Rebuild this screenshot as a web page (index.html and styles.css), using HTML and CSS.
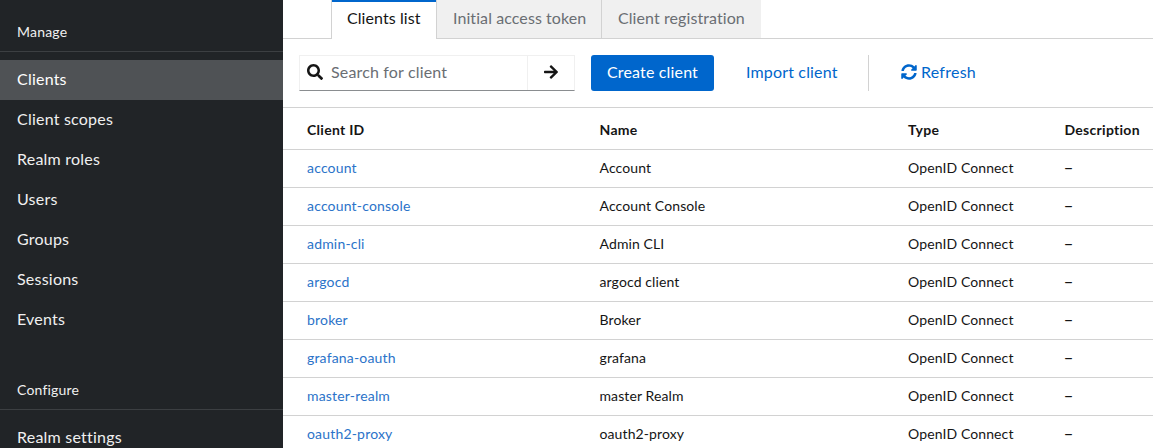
FILE: index.html
```html
<!DOCTYPE html>
<html lang="en">
<head>
<meta charset="utf-8">
<title>Clients</title>
<link rel="stylesheet" href="styles.css">
</head>
<body>
<div class="page">
  <nav class="sidebar">
    <section class="nav-section">
      <h2 class="nav-title">Manage</h2>
      <a class="nav-link nav-current">Clients</a>
      <a class="nav-link">Client scopes</a>
      <a class="nav-link">Realm roles</a>
      <a class="nav-link">Users</a>
      <a class="nav-link">Groups</a>
      <a class="nav-link">Sessions</a>
      <a class="nav-link">Events</a>
    </section>
    <section class="nav-section">
      <h2 class="nav-title">Configure</h2>
      <a class="nav-link">Realm settings</a>
    </section>
  </nav>
  <main class="main">
    <div class="tabs">
      <div class="tab tab-current">Clients list</div>
      <div class="tab tab-token">Initial access token</div>
      <div class="tab tab-registration">Client registration</div>
    </div>
    <div class="toolbar">
      <div class="search">
        <div class="search-field">
          <svg class="icon" viewBox="0 0 512 512"><path d="M505 442.7L405.3 343c-4.500-4.500-10.600-7-17-7H372c27.600-35.300 44-79.700 44-128C416 93.100 322.900 0 208 0S0 93.100 0 208s93.100 208 208 208c48.300 0 92.700-16.400 128-44v16.300c0 6.400 2.500 12.500 7 17l99.700 99.700c9.400 9.400 24.600 9.400 33.900 0l28.300-28.300c9.400-9.400 9.400-24.600.1-34zM208 336c-70.700 0-128-57.200-128-128 0-70.700 57.200-128 128-128 70.700 0 128 57.200 128 128 0 70.700-57.200 128-128 128z"/></svg>
          <span>Search for client</span>
        </div>
        <div class="search-submit">
          <svg class="arrow" viewBox="0 0 448 512"><path d="M190.500 66.900l22.200-22.200c9.400-9.400 24.600-9.400 33.900 0L441 239c9.400 9.400 9.400 24.600 0 33.900L246.600 467.300c-9.400 9.400-24.600 9.400-33.900 0l-22.200-22.200c-9.500-9.500-9.300-25 .4-34.300L311.400 296H24c-13.300 0-24-10.700-24-24v-32c0-13.300 10.700-24 24-24h287.400L190.900 101.200c-9.800-9.300-10-24.800-.4-34.300z"/></svg>
        </div>
      </div>
      <div class="button button-primary">Create client</div>
      <div class="button button-link">Import client</div>
      <div class="divider"></div>
      <div class="refresh">
        <svg class="icon" viewBox="0 0 512 512"><path d="M370.720 133.280C339.458 104.008 298.888 87.962 255.848 88c-77.458.068-144.328 53.178-162.791 126.850-1.344 5.363-6.122 9.150-11.651 9.150H24.103c-7.498 0-13.194-6.807-11.807-14.176C33.933 94.924 134.813 8 256 8c66.448 0 126.791 26.136 171.315 68.685L463.030 40.970C478.149 25.851 504 36.559 504 57.941V192c0 13.255-10.745 24-24 24H345.941c-21.382 0-32.090-25.851-16.971-40.971l41.750-41.749zM32 296h134.059c21.382 0 32.090 25.851 16.971 40.971l-41.750 41.750c31.262 29.273 71.835 45.319 114.876 45.280 77.418-.070 144.315-53.144 162.787-126.849 1.344-5.363 6.122-9.150 11.651-9.150h57.304c7.498 0 13.194 6.807 11.807 14.176C478.067 417.076 377.187 504 256 504c-66.448 0-126.791-26.136-171.315-68.685L48.970 471.030C33.851 486.149 8 475.441 8 454.059V320c0-13.255 10.745-24 24-24z"/></svg>
        <span>Refresh</span>
      </div>
    </div>
    <div class="table">
      <div class="row head"><span>Client ID</span><span>Name</span><span>Type</span><span>Description</span></div>
      <div class="row"><a class="client">account</a><span>Account</span><span>OpenID Connect</span><span class="dash">–</span></div>
      <div class="row"><a class="client">account-console</a><span>Account Console</span><span>OpenID Connect</span><span class="dash">–</span></div>
      <div class="row"><a class="client">admin-cli</a><span>Admin CLI</span><span>OpenID Connect</span><span class="dash">–</span></div>
      <div class="row"><a class="client">argocd</a><span>argocd client</span><span>OpenID Connect</span><span class="dash">–</span></div>
      <div class="row"><a class="client">broker</a><span>Broker</span><span>OpenID Connect</span><span class="dash">–</span></div>
      <div class="row"><a class="client">grafana-oauth</a><span>grafana</span><span>OpenID Connect</span><span class="dash">–</span></div>
      <div class="row"><a class="client">master-realm</a><span>master Realm</span><span>OpenID Connect</span><span class="dash">–</span></div>
      <div class="row"><a class="client">oauth2-proxy</a><span>oauth2-proxy</span><span>OpenID Connect</span><span class="dash">–</span></div>
    </div>
  </main>
</div>
</body>
</html>
```
FILE: styles.css
```css
* { box-sizing: border-box; }
body {
  margin: 0;
  font-family: Lato, "Open Sans", sans-serif;
  font-size: 16px;
  line-height: 24px;
  letter-spacing: .08px;
  color: #151515;
  background: #fff;
}
.page { display: flex; height: 448px; overflow: hidden; }

.sidebar {
  flex: 0 0 283px;
  background: #212427;
  color: #f0f0f0;
  letter-spacing: .22px;
  padding-top: 12px;
}
.nav-section { margin-bottom: 30px; }
.nav-title {
  margin: 0 0 8px;
  height: 40px;
  padding: 9px 17px 0;
  border-bottom: 1px solid #3c3f42;
  font-size: 14px;
  font-weight: 400;
  line-height: 22px;
  letter-spacing: .2px;
}
.nav-link { display: block; height: 40px; padding: 7px 17px; }
.nav-current { background: #4f5255; color: #fff; }

.main { flex: 1; min-width: 0; }
.tabs {
  display: flex;
  height: 39px;
  padding-left: 48px;
  box-shadow: inset 0 -1px #d2d2d2;
}
.tab {
  padding: 6px 16px 0;
  background: #f0f0f0;
  color: #6a6e73;
  border-bottom: 1px solid #d2d2d2;
  white-space: nowrap;
}
.tab-current {
  width: 106px;
  padding: 6px 15px 0;
  color: #151515;
  background: #fff;
  border: solid #d2d2d2;
  border-width: 0 1px;
  box-shadow: inset 0 2px #06c;
}
.tab-token { width: 165px; border-right: 1px solid #d2d2d2; }
.tab-registration { width: 159px; }

.toolbar { display: flex; height: 68px; padding: 16px 16px 0; }
.search {
  display: flex;
  width: 276px;
  height: 36px;
  border: 1px solid #f0f0f0;
  border-bottom-color: #8a8d90;
}
.search-field {
  display: flex;
  align-items: center;
  gap: 8px;
  width: 228px;
  padding: 0 0 2px 7px;
  border-right: 1px solid #f0f0f0;
  color: #6a6e73;
  letter-spacing: .16px;
}
.icon { width: 16px; height: 16px; fill: currentColor; }
.search-field .icon { color: #151515; }
.search-submit { flex: 1; display: flex; align-items: center; justify-content: center; padding: 0 1px 2px 0; }
.arrow { width: 14px; height: 16px; fill: #151515; }
.button { height: 36px; padding: 5px 16px; border-radius: 3px; margin-left: 16px; letter-spacing: .16px; white-space: nowrap; }
.button-primary { width: 123px; background: #06c; color: #fff; }
.button-link { width: 122px; color: #06c; }
.divider { width: 1px; height: 36px; margin-left: 16px; background: #d2d2d2; }
.refresh { display: flex; align-items: center; gap: 4px; height: 36px; padding-bottom: 2px; margin-left: 32px; color: #06c; letter-spacing: .25px; }

.table { border-top: 1px solid #d2d2d2; font-size: 14px; line-height: 21px; letter-spacing: .11px; }
.row {
  display: grid;
  grid-template-columns: 292.500px 308.500px 156.500px 1fr;
  height: 38px;
  padding: 7px 0 0 24px;
  border-bottom: 1px solid #d2d2d2;
  white-space: nowrap;
}
.head { height: 42px; padding-top: 11px; font-weight: 700; letter-spacing: .28px; }
.client { color: #2b73c9; letter-spacing: .18px; }
.dash { font-family: "Open Sans", sans-serif; font-size: 16px; }
```
